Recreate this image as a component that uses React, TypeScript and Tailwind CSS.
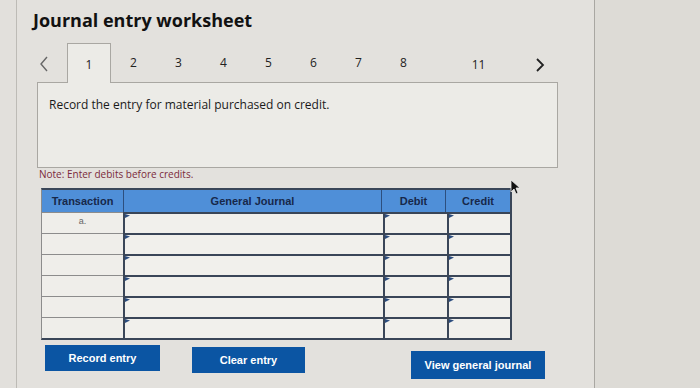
import React from "react";

const tabs = ["1", "2", "3", "4", "5", "6", "7", "8"];

function Flag() {
  return (
    <svg className="absolute left-0 top-0" width="5" height="5" viewBox="0 0 5 5">
      <polygon points="0,0 5,1.5 0,4" fill="#2b4c7e" />
    </svg>
  );
}

function InputCell({ w }: { w: string }) {
  return (
    <div className={`relative ${w} h-full bg-[#f1f0ec] border-l-2 border-t-2 border-[#3a4658]`}>
      <Flag />
    </div>
  );
}

export default function App() {
  const rows = [0, 1, 2, 3, 4, 5];
  return (
    <div
      className="relative w-[700px] h-[388px] overflow-hidden flex bg-[#dcdad5]"
      style={{ fontFamily: "'Open Sans', 'Liberation Sans', sans-serif" }}
    >
      <div className="w-[17px] h-full bg-[#e2e0dc] border-r border-[#bdbbb6]" />
      <div className="w-[578px] h-full bg-[#e3e1dd] border-r border-[#a9a7a2] flex flex-col pl-[16px]">
        <h1 className="mt-[8px] text-[18px] leading-[24px] font-bold text-[#111]">Journal entry worksheet</h1>

        <div className="mt-[10px] flex items-end h-[40px]">
          <div className="w-[34px] h-[40px] flex items-center pl-[6px] pt-[4px]">
            <svg width="10" height="16" viewBox="0 0 10 16">
              <polyline points="8,1 2,8 8,15" fill="none" stroke="#666" strokeWidth="1.4" />
            </svg>
          </div>
          {tabs.map((t, i) =>
            i === 0 ? (
              <div
                key={t}
                className="relative z-10 w-[44px] h-[40px] -mb-px bg-[#ecebe7] border border-b-0 border-[#a9a7a2] flex items-center justify-center text-[12px] text-[#222] pt-[2px]"
              >
                {t}
              </div>
            ) : (
              <div key={t} className="w-[45px] h-[40px] flex items-center justify-center text-[12px] text-[#222] pt-[2px]">
                {t}
              </div>
            )
          )}
          <div className="w-[30px]" />
          <div className="w-[45px] h-[40px] flex items-center justify-center text-[12px] text-[#222] pt-[6px]">11</div>
          <div className="w-[34px]" />
          <div className="h-[40px] flex items-center pt-[6px]">
            <svg width="10" height="16" viewBox="0 0 10 16">
              <polyline points="2,2 8,8 2,14" fill="none" stroke="#222" strokeWidth="1.8" />
            </svg>
          </div>
        </div>

        <div className="w-[521px] h-[86px] ml-[4px] bg-[#ecebe7] border border-[#a9a7a2] pl-[11px] pt-[13px]">
          <p className="text-[12px] text-[#1a1a1a]">Record the entry for material purchased on credit.</p>
        </div>

        <p className="-mt-[2px] ml-[6px] text-[10px] leading-[16px] text-[#7b2a3b]">Note: Enter debits before credits.</p>

        <div
          className="mt-[6px] ml-[8px] w-[471px] border-2 border-l border-[#3a4658] border-l-[#8c8c8c]"
          style={{ fontFamily: "'Liberation Sans', Arial, sans-serif" }}
        >
          <div className="flex h-[22px] bg-[#4f8fd8] text-[11px] font-bold text-[#17284a]">
            <div className="w-[82px] flex items-center justify-center border-r border-[#2d4f7e]">Transaction</div>
            <div className="w-[258px] flex items-center justify-center border-r border-[#2d4f7e]">General Journal</div>
            <div className="w-[64px] flex items-center justify-center border-r border-[#2d4f7e]">Debit</div>
            <div className="flex-1 flex items-center justify-center">Credit</div>
          </div>
          {rows.map((r) => (
            <div key={r} className="flex h-[21px] bg-[#efeeea]">
              <div className="w-[81px] h-full flex items-start justify-center pt-[2px] text-[9px] text-[#666] border-t border-[#8c8c8c]">
                {r === 0 ? "a." : ""}
              </div>
              <InputCell w="w-[260px]" />
              <InputCell w="w-[64px]" />
              <InputCell w="flex-1" />
            </div>
          ))}
        </div>

        <div
          className="mt-[5px] flex items-start text-[11px] font-bold text-white"
          style={{ fontFamily: "'Liberation Sans', Arial, sans-serif" }}
        >
          <button className="ml-[12px] w-[115px] h-[26px] bg-[#0b55a3] flex items-center justify-center">Record entry</button>
          <button className="ml-[32px] mt-[2px] w-[113px] h-[26px] bg-[#0b55a3] flex items-center justify-center">Clear entry</button>
          <button className="ml-[106px] mt-[6px] w-[134px] h-[28px] bg-[#0b55a3] flex items-center justify-center">View general journal</button>
        </div>
      </div>
      <div className="flex-1 h-full bg-[#dddbd6]" />

      <svg className="absolute left-[510px] top-[179px]" width="12" height="16" viewBox="0 0 12 16">
        <polygon points="1,1 1,13 4,10 6,15 8,14 6,9 10,9" fill="#111" stroke="#eee" strokeWidth="0.8" />
      </svg>
    </div>
  );
}
